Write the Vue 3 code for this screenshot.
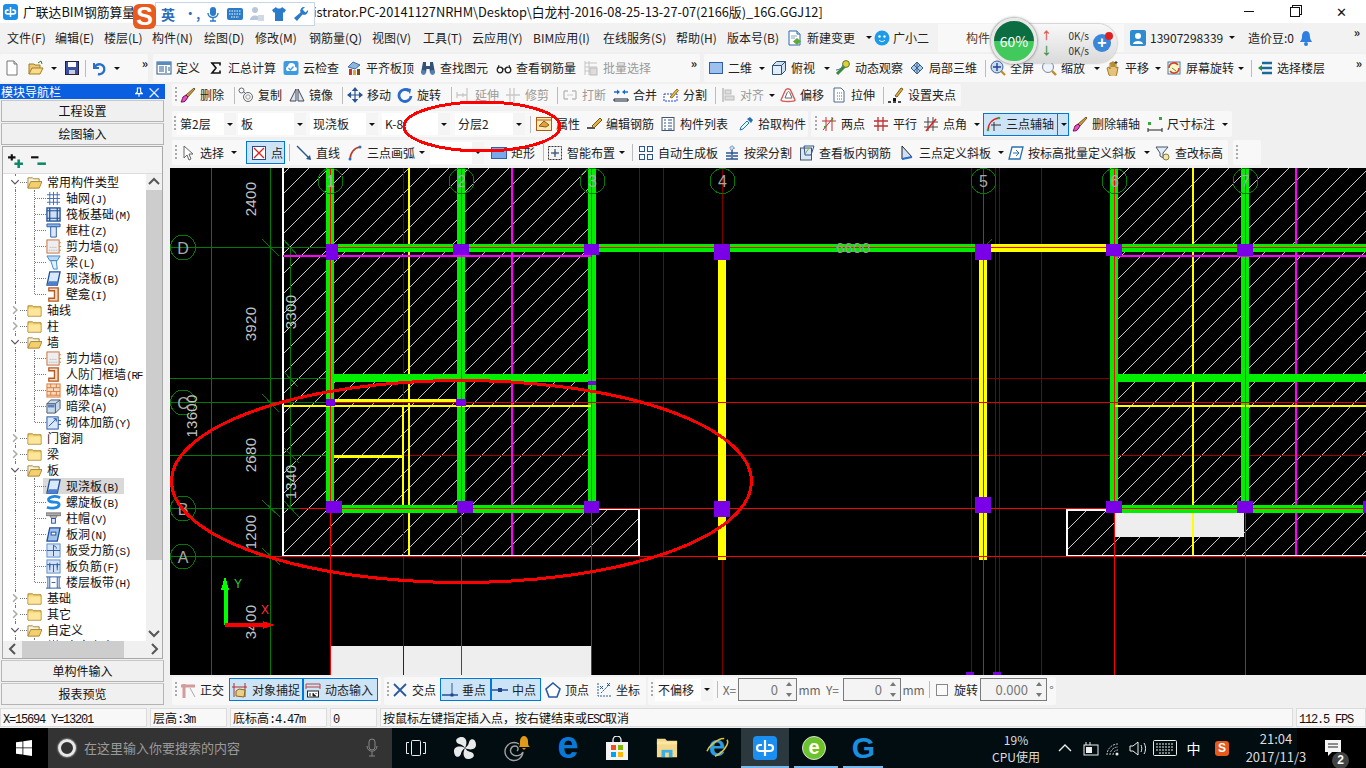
<template>
  <div class="app">
    <!-- иконки -->
    <svg class="defs" width="0" height="0">
      <symbol id="doc" viewBox="0 0 16 16"><path d="M3 1h7l3 3v11H3z" fill="#fff" stroke="#777"/><path d="M10 1v3h3" fill="#ddd" stroke="#777"/></symbol>
      <symbol id="newc" viewBox="0 0 16 16"><path d="M2 1h8l3 3v11H2z" fill="#fff" stroke="#2a6ab0"/><path d="M10 1v3h3" fill="#cfe0f2" stroke="#2a6ab0"/><path d="M4 6h6M4 8h4" stroke="#8ab"/><path d="M10 8l4 3.500-4 3.500-4-3.500z" fill="#5fa83a"/></symbol>
      <symbol id="open" viewBox="0 0 16 16"><path d="M1 14V4h5l1 1h5v3" fill="#e9c877" stroke="#a67c20"/><path d="M1 14l3-6h11l-3 6z" fill="#f8dc8a" stroke="#a67c20"/><path d="M10 3l3-2 1 3" fill="none" stroke="#3a7d2c"/></symbol>
      <symbol id="save" viewBox="0 0 16 16"><rect x="1.500" y="1.500" width="13" height="13" fill="#3d50a8" stroke="#223"/><rect x="4" y="2" width="8" height="5" fill="#fff"/><rect x="5" y="10" width="6" height="4" fill="#c8cde0"/></symbol>
      <symbol id="undo" viewBox="0 0 16 16"><path d="M3 3v5h5" fill="none" stroke="#2a70c8" stroke-width="2"/><path d="M3.500 8a5 5 0 1 1 3.500 6" fill="none" stroke="#2a70c8" stroke-width="2.400"/></symbol>
      <symbol id="def" viewBox="0 0 16 16"><rect x="1" y="2" width="14" height="12" fill="#fff" stroke="#2a5a8a"/><rect x="1" y="2" width="14" height="3" fill="#5a8ac0"/><path d="M3 7h5M3 9h5M3 11h5M10 6v7M12 8h2M12 10h2" stroke="#2a5a8a"/></symbol>
      <symbol id="sigma" viewBox="0 0 16 16"><path d="M3 3h9v2.500M11.500 3H4l4 5-4 5h8v-2.500" fill="none" stroke="#111" stroke-width="1.600"/></symbol>
      <symbol id="cloud" viewBox="0 0 16 16"><rect x="0.500" y="1" width="15" height="14" rx="2" fill="#3f9be0"/><path d="M4 11a3 3 0 0 1 1-5 3.500 3.500 0 0 1 7 1 2 2 0 0 1 0 4z" fill="#fff"/><path d="M5.500 8l2 2 3-3.500" fill="none" stroke="#3f9be0" stroke-width="1.300"/></symbol>
      <symbol id="flat" viewBox="0 0 16 16"><path d="M2 7l5-5 7 3-5 4z" fill="#8fb6df" stroke="#3a6ea5"/><rect x="3" y="9" width="3" height="6" fill="#c0392b"/><rect x="7" y="10" width="3" height="5" fill="#e2a23b"/><rect x="11" y="9" width="3" height="6" fill="#6b4a2a"/></symbol>
      <symbol id="binoc" viewBox="0 0 16 16"><path d="M3 2h3v4h4V2h3l2 11h-5l-.5-4h-3L6 13H1z" fill="#33527a"/><circle cx="3.500" cy="12.500" r="2.400" fill="#5580b0"/><circle cx="12.500" cy="12.500" r="2.400" fill="#5580b0"/></symbol>
      <symbol id="glass" viewBox="0 0 16 16"><circle cx="4" cy="10" r="2.800" fill="#fff" stroke="#222" stroke-width="1.300"/><circle cx="12" cy="10" r="2.800" fill="#fff" stroke="#222" stroke-width="1.300"/><path d="M6.500 9h3M1.500 9L3 5M14.500 9L13 5" stroke="#222" fill="none"/></symbol>
      <symbol id="batch" viewBox="0 0 16 16"><path d="M2 1v14M6 1v14M2 3h12M2 7h12M2 11h12" stroke="#c4c4c4" fill="none"/><rect x="7" y="8" width="7" height="7" fill="#ddd" stroke="#bbb"/></symbol>
      <symbol id="sq2d" viewBox="0 0 16 16"><rect x="1.500" y="2.500" width="13" height="11" fill="#9dc0ec" stroke="#2f5fa8"/></symbol>
      <symbol id="cube" viewBox="0 0 16 16"><path d="M1.500 5.500l4-4h9v9l-4 4h-9z" fill="#cfe0f2" stroke="#31506f"/><path d="M1.500 5.500h9v9M10.500 5.500l4-4" fill="none" stroke="#31506f"/><path d="M2 6h8v8H2z" fill="#e6f0fb" opacity=".8"/></symbol>
      <symbol id="orbit" viewBox="0 0 16 16"><path d="M2 14L13 3" stroke="#3b8a3b" stroke-width="3"/><circle cx="11" cy="4" r="3.400" fill="#e0d040" stroke="#5a7a1a"/><path d="M1 10c3 0 6-2 7-5" fill="none" stroke="#3b70b0"/></symbol>
      <symbol id="local3" viewBox="0 0 16 16"><path d="M2 8l6-6 6 6-6 6z" fill="#a9c8ea" stroke="#3a5f8a"/><path d="M5 5l6 6M8 2v12M11 5l-6 6" stroke="#3a5f8a"/></symbol>
      <symbol id="zall" viewBox="0 0 16 16"><circle cx="7" cy="7" r="6" fill="#c7dcf4" stroke="#3a5f9a"/><path d="M7 3v8M3 7h8" stroke="#27408b" stroke-width="1.400"/><path d="M11 11l4 4" stroke="#c08a2a" stroke-width="2.200"/></symbol>
      <symbol id="zoom" viewBox="0 0 16 16"><circle cx="7" cy="7" r="5.500" fill="#eef3f9" stroke="#7a8ca0"/><path d="M11 11l4 4" stroke="#c08a2a" stroke-width="2.400"/></symbol>
      <symbol id="pan" viewBox="0 0 16 16"><path d="M4 15L2 8l2-1 1 2V3l2 0v4-5h2v5-4h2v5l2-1-1 6-2 6z" fill="#e7c27a" stroke="#a67c20"/><path d="M11 1v3M9.500 2.500h3" stroke="#345"/></symbol>
      <symbol id="rots" viewBox="0 0 16 16"><rect x="2" y="2" width="12" height="12" fill="#fff6c8" stroke="#3a80c0"/><path d="M3 8a5 5 0 0 1 9-3M13 8a5 5 0 0 1-9 3" fill="none" stroke="#d9402a" stroke-width="1.600"/><path d="M6 8l4 3" stroke="#4a9a3a"/></symbol>
      <symbol id="floors" viewBox="0 0 16 16"><path d="M5 3h10M5 8h10M5 13h10" stroke="#1a6a9a" stroke-width="2.500"/><path d="M1 8l4-3v6z" fill="#2a8a3a"/></symbol>
      <symbol id="brush" viewBox="0 0 16 16"><path d="M14 1l1 1-7 8-2-2z" fill="#c89a4a" stroke="#7a5a20"/><path d="M6 8l2 2-2 3c-1 2-3 2-5 2 1-1 1-3 2-5z" fill="#d85ac0" stroke="#805"/></symbol>
      <symbol id="copy" viewBox="0 0 16 16"><circle cx="3.500" cy="3.500" r="2.500" fill="none" stroke="#666"/><circle cx="10" cy="10" r="4.500" fill="none" stroke="#666"/><circle cx="10" cy="10" r="2.200" fill="none" stroke="#999"/><path d="M6 5l2 2" stroke="#2a70c8"/></symbol>
      <symbol id="mirror" viewBox="0 0 16 16"><path d="M7 2v12H1zM9 2v12h6z" fill="#dde7f2" stroke="#445"/></symbol>
      <symbol id="move" viewBox="0 0 16 16"><path d="M8 1v14M1 8h14M8 1L6 3.500h4zM8 15l-2-2.500h4zM1 8l2.500-2v4zM15 8l-2.500-2v4z" stroke="#2a5590" fill="#2a5590" stroke-width="1.200"/></symbol>
      <symbol id="rot" viewBox="0 0 16 16"><path d="M12 4a6 6 0 1 0 2 5" fill="none" stroke="#2a6ac8" stroke-width="2.800"/><path d="M9 1l5 1-1 5z" fill="#2a6ac8"/></symbol>
      <symbol id="ext" viewBox="0 0 16 16"><path d="M12 1v14M2 8h10M2 5v6M8 6v4" stroke="#c8c8c8" fill="none" stroke-width="1.300"/></symbol>
      <symbol id="trim" viewBox="0 0 16 16"><path d="M5 1v14M9 1v14M1 8h14" stroke="#c8c8c8" fill="none" stroke-width="1.300"/></symbol>
      <symbol id="brk" viewBox="0 0 16 16"><path d="M2 4h4M10 4h4M2 12h4M10 12h4M2 4v8M14 4v8" stroke="#bbb" fill="none" stroke-width="1.400"/><path d="M5 8h6" stroke="#ccc"/></symbol>
      <symbol id="merge" viewBox="0 0 16 16"><path d="M1 12h14M1 14h14M1 12v2M15 12v2" stroke="#123" fill="none"/><path d="M1 5h5M15 5h-5" stroke="#1a6ad0" stroke-width="1.500"/><path d="M7 5L4 2.500v5zM9 5l3-2.500v5z" fill="#1a6ad0"/></symbol>
      <symbol id="split" viewBox="0 0 16 16"><rect x="1" y="7" width="13" height="7" fill="#fff" stroke="#2440d0" stroke-dasharray="2 1"/><path d="M7 10L14 2l1.500 1.500L9 11z" fill="#e6c24a" stroke="#8a6a1a"/></symbol>
      <symbol id="align" viewBox="0 0 16 16"><path d="M3 1v14" stroke="#bbb" stroke-width="1.500"/><rect x="5" y="3" width="6" height="4" fill="#ddd" stroke="#bbb"/><rect x="5" y="9" width="9" height="4" fill="#ddd" stroke="#bbb"/></symbol>
      <symbol id="offs" viewBox="0 0 16 16"><path d="M1 13l4-9c1-3 5-3 6 0l4 9c1 2-14 2-14 0z" fill="#fff" stroke="#d65a5a" stroke-width="1.400"/><path d="M5 11l2-5c1-2 2-2 3 0l2 5z" fill="#fff" stroke="#666"/></symbol>
      <symbol id="strch" viewBox="0 0 16 16"><path d="M3 1h7l3 3v11H3z" fill="#fff" stroke="#4a6a8a"/><path d="M6 6h5M6 9h5M6 12h5" stroke="#4a6a8a" stroke-dasharray="1 1"/></symbol>
      <symbol id="setp" viewBox="0 0 16 16"><path d="M7 9l6-8 2 1-6 8z" fill="#e2b24a" stroke="#7a5a10"/><path d="M0 15h3M5 15h3M10 15h3" stroke="#111" stroke-width="1.400"/><rect x="5" y="11" width="3" height="3" fill="#111"/></symbol>
      <symbol id="prop" viewBox="0 0 16 16"><rect x="0.500" y="1.500" width="15" height="13" fill="#ffe9b8" stroke="#b05a10"/><path d="M3 10l5-5 5 4-3 2z" fill="#e2a23b" stroke="#8a5a10"/><path d="M1 4h14" stroke="#b05a10"/></symbol>
      <symbol id="edit" viewBox="0 0 16 16"><path d="M1 12h8" stroke="#222" stroke-width="1.500"/><path d="M6 10L14 2l2 2-8 8z" fill="#e2b24a" stroke="#7a5a10"/></symbol>
      <symbol id="list" viewBox="0 0 16 16"><rect x="2" y="1.500" width="12" height="13" fill="#fff" stroke="#456"/><path d="M4 4h2M8 4h4M4 7h2M8 7h4M4 10h2M8 10h4M4 13h2M8 13h4" stroke="#2a5590"/></symbol>
      <symbol id="pick" viewBox="0 0 16 16"><path d="M2 14l1-3 6-6 2 2-6 6z" fill="#dff" stroke="#2a70b0"/><path d="M9 3l4 4 2-3-3-3z" fill="#2a70b0"/></symbol>
      <symbol id="two" viewBox="0 0 16 16"><path d="M1 5h14M5 1v14M2 14L12 2M11 1v14" stroke="#b33" fill="none"/><rect x="3" y="10" width="2" height="2" fill="#3a3"/><rect x="10" y="3" width="2" height="2" fill="#3a3"/></symbol>
      <symbol id="para" viewBox="0 0 16 16"><path d="M1 5h14M1 10h14M5 1v14M10 1v14" stroke="#b33" fill="none" stroke-width="1.300"/></symbol>
      <symbol id="ang" viewBox="0 0 16 16"><path d="M1 6h14M1 11h14M5 1v14M10 1v14" stroke="#444" fill="none"/><path d="M3 15L13 3" stroke="#d22" stroke-width="1.600"/></symbol>
      <symbol id="arc3" viewBox="0 0 16 16"><path d="M2 15C2 8 6 3 13 2" fill="none" stroke="#d22" stroke-width="1.500"/><path d="M8 6v9M5 9h10" stroke="#333"/><circle cx="2" cy="14" r="1.300" fill="#3a3"/><circle cx="13" cy="2" r="1.300" fill="#3a3"/></symbol>
      <symbol id="dim" viewBox="0 0 16 16"><path d="M1 12v4M15 12v4M1 14h14" stroke="#222" fill="none"/><rect x="1" y="6" width="3" height="3" fill="#3a3"/><rect x="12" y="1" width="3" height="3" fill="#3a3"/></symbol>
      <symbol id="cur" viewBox="0 0 16 16"><path d="M4 1v12l3-3 2 5 2-1-2-5h4z" fill="#fff" stroke="#666"/></symbol>
      <symbol id="ptb" viewBox="0 0 16 16"><rect x="1.500" y="1.500" width="13" height="13" fill="#fff" stroke="#2a4a8a"/><path d="M3 3l10 10M13 3L3 13" stroke="#d22" stroke-width="1.300"/></symbol>
      <symbol id="line" viewBox="0 0 16 16"><path d="M1 1l13 13" stroke="#2a5590" stroke-width="1.400"/><path d="M15 15l-5-1 4-4z" fill="#2a5590"/></symbol>
      <symbol id="arc" viewBox="0 0 16 16"><path d="M3 15C3 8 7 3 13 2" fill="none" stroke="#b83a2a" stroke-width="1.600"/><circle cx="3" cy="14" r="1.500" fill="#2a70c0"/><circle cx="13" cy="2" r="1.500" fill="#2a70c0"/></symbol>
      <symbol id="rect" viewBox="0 0 16 16"><rect x="0.500" y="2.500" width="15" height="11" fill="#7aa8e8" stroke="#2f5fa8"/></symbol>
      <symbol id="smart" viewBox="0 0 16 16"><rect x="1.500" y="1.500" width="13" height="13" fill="#f4f4f4" stroke="#333" stroke-dasharray="2 1"/><path d="M8 4v8M4 8h8" stroke="#222"/><circle cx="8" cy="8" r="1.500" fill="#2a70c0"/></symbol>
      <symbol id="auto" viewBox="0 0 16 16"><g fill="none" stroke="#2a5590"><rect x="1.500" y="1.500" width="5" height="5"/><rect x="9.500" y="1.500" width="5" height="5"/><rect x="1.500" y="9.500" width="5" height="5"/><rect x="9.500" y="9.500" width="5" height="5"/></g></symbol>
      <symbol id="bsp" viewBox="0 0 16 16"><circle cx="8" cy="3" r="2" fill="#c9dcf2" stroke="#2a5590" stroke-dasharray="1 1"/><path d="M8 5v9M2 8h12M2 11h5M9 11h5M2 14h12" stroke="#2a5590" stroke-width="1.400"/></symbol>
      <symbol id="vbar" viewBox="0 0 16 16"><rect x="1.500" y="3" width="11" height="12" fill="#dbe7f5" stroke="#456"/><path d="M5 1l10 0-3 9H6z" fill="none" stroke="#2a5590"/><path d="M6 9l4-6" stroke="#8a3"/></symbol>
      <symbol id="sl3" viewBox="0 0 16 16"><path d="M3 1v13l10-2z" fill="#cde2f8" stroke="#222"/><path d="M3 14l10-2" stroke="#2a70c8" stroke-width="2"/></symbol>
      <symbol id="slb" viewBox="0 0 16 16"><path d="M4 2h11l-3 12H1z" fill="#fff" stroke="#2a70b0" stroke-width="1.300"/><path d="M5 8h6M8 5l3 3-3 3" stroke="#2a70b0" fill="none"/></symbol>
      <symbol id="elev" viewBox="0 0 16 16"><path d="M1 2h12L8 8v5l-3-2V8z" fill="#e4ecf5" stroke="#456"/><circle cx="11" cy="12" r="3" fill="#f3e5a8" stroke="#8a7a3a"/></symbol>
      <symbol id="orth" viewBox="0 0 16 16"><path d="M4 2v14M1 4h14" stroke="#d49b9b" stroke-width="3" fill="none"/><path d="M10 6l5 9" stroke="#aaa"/></symbol>
      <symbol id="snap" viewBox="0 0 16 16"><path d="M2 1v14M13 1v14M0 5h15" stroke="#a33" fill="none"/><path d="M4 14V9l3-2 6 1-1 7z" fill="#e9cf8a" stroke="#8a6a1a"/></symbol>
      <symbol id="dyn" viewBox="0 0 16 16"><path d="M1 2h14M1 5h14M1 2v5M15 2v5" stroke="#b44" fill="none"/><rect x="2.500" y="9" width="11" height="6" fill="#fff" stroke="#222"/><path d="M5 11v3M8 11v3h3M11 11v1" stroke="#222"/></symbol>
      <symbol id="xp" viewBox="0 0 16 16"><path d="M2 2l12 12M14 2L2 14" stroke="#2a5aa0" stroke-width="1.800"/></symbol>
      <symbol id="perp" viewBox="0 0 16 16"><path d="M0 13h16" stroke="#2a5aa0" stroke-width="1.600"/><path d="M10 1v12" stroke="#2a5aa0"/><rect x="8.500" y="11.500" width="3" height="3" fill="#27408b"/></symbol>
      <symbol id="mid" viewBox="0 0 16 16"><path d="M0 8h16" stroke="#2a5aa0" stroke-width="1.600"/><rect x="6" y="6" width="4" height="4" fill="#27408b"/></symbol>
      <symbol id="vtx" viewBox="0 0 16 16"><path d="M8 1l7 6-3 8H4L1 7z" fill="#fff" stroke="#2a5aa0" stroke-width="1.600"/></symbol>
      <symbol id="crd" viewBox="0 0 16 16"><path d="M2 1v13h13M5 11L13 3" stroke="#2a5aa0" fill="none" stroke-dasharray="2 1"/><path d="M4 4l3 3M7 4L4 7M11 1l3 3M14 1l-3 3" stroke="#2a5aa0"/></symbol>
      <symbol id="fclose" viewBox="0 0 16 16"><path d="M1 3h5l1 1h8v10H1z" fill="#f6d473" stroke="#a8852a"/><path d="M1.500 6h13v7.500h-13z" fill="#fbe69b"/></symbol>
      <symbol id="fopen" viewBox="0 0 16 16"><path d="M1 14V3h5l1 1h6v3" fill="#f4f0df" stroke="#a8852a"/><path d="M1 14l3-7h12l-3 7z" fill="#f4cf6e" stroke="#a8852a"/></symbol>
      <symbol id="grid" viewBox="0 0 16 16"><path d="M4 1v14M8 1v14M12 1v14M1 4h14M1 8h14M1 12h14" stroke="#3a6ab8" fill="none"/></symbol>
      <symbol id="raft" viewBox="0 0 16 16"><rect x="1" y="1" width="14" height="14" fill="#cfe0f4" stroke="#1f4f9a" stroke-width="1.400"/><path d="M4 1v14M12 1v14M1 4h14M1 12h14" stroke="#1f4f9a" stroke-width="1.300"/></symbol>
      <symbol id="col" viewBox="0 0 16 16"><path d="M1 1h14v3H1z" fill="#8fb6e8" stroke="#2a5aa8"/><path d="M5 4h6v11H5z" fill="#dbe9fa" stroke="#2a5aa8"/></symbol>
      <symbol id="shear" viewBox="0 0 16 16"><rect x="1" y="1" width="13" height="14" fill="#eee" stroke="#c86a3a"/><path d="M14 4h2M14 8h2M14 12h2" stroke="#d8802a"/><path d="M3 12h9M4 9h7" stroke="#aaa" stroke-dasharray="1 1"/></symbol>
      <symbol id="beam" viewBox="0 0 16 16"><path d="M1 1h14l-3 5H4z" fill="#bcd8f4" stroke="#3a88c8"/><path d="M5 6h6l1 9H8z" fill="#e4f0fc" stroke="#3a88c8"/></symbol>
      <symbol id="slab" viewBox="0 0 16 16"><path d="M4 1h11l-3 14H1z" fill="#d9e8fb" stroke="#1f4f9a" stroke-width="1.400"/><path d="M3 11l-2 4h11l1-4z" fill="#4a80d0"/></symbol>
      <symbol id="niche" viewBox="0 0 16 16"><path d="M3 1h10v14H3v-3h6V4H3z" fill="#f3d9c6" stroke="#b8581f" stroke-width="1.400"/></symbol>
      <symbol id="brick" viewBox="0 0 16 16"><rect x="1" y="1" width="14" height="14" fill="#f8dcc4" stroke="#d87a3a"/><path d="M1 5h14M1 9h14M1 13h14M5 1v4M11 1v4M8 5v4M5 9v4M11 9v4" stroke="#d87a3a"/></symbol>
      <symbol id="dkb" viewBox="0 0 16 16"><path d="M1 5l4-4h10v9l-5 5H1z" fill="#c6d9ee" stroke="#456"/><path d="M1 5h9v10M10 5l5-4" fill="none" stroke="#456"/><rect x="2" y="6" width="7" height="3" fill="#5a80b8"/></symbol>
      <symbol id="wbar" viewBox="0 0 16 16"><rect x="1" y="2" width="12" height="13" fill="#d9e8fb" stroke="#1f4f9a"/><path d="M3 12L11 4M8 4h3v3M13 6h3M13 10h3" stroke="#1f4f9a" fill="none"/></symbol>
      <symbol id="spiral" viewBox="0 0 16 16"><path d="M15 3C10 0 1 2 3 6c2 3 11 0 11 4 0 4-8 5-13 3" fill="none" stroke="#1f8ae0" stroke-width="3"/></symbol>
      <symbol id="cap" viewBox="0 0 16 16"><rect x="0" y="2" width="16" height="3" fill="#aaa" stroke="#777"/><path d="M4 5h8l-2 3H6z" fill="#bbb" stroke="#777"/><rect x="6" y="8" width="4" height="5" fill="#e4f0fc" stroke="#1f4f9a"/></symbol>
      <symbol id="hole" viewBox="0 0 16 16"><path d="M4 1h11l-3 14H1z" fill="#9fc2ee" stroke="#1f4f9a" stroke-width="1.400"/><rect x="5.500" y="5.500" width="5" height="3" fill="#fff" stroke="#1f4f9a"/></symbol>
      <symbol id="bpos" viewBox="0 0 16 16"><rect x="1" y="1" width="14" height="14" fill="#d2e3f8" stroke="#5a8ad0"/><path d="M1 8h14M8 2v12M8 3c3 0 3 2 3 3" stroke="#2a5aa8" fill="none"/></symbol>
      <symbol id="bneg" viewBox="0 0 16 16"><rect x="1" y="1" width="14" height="14" fill="#d2e3f8" stroke="#5a8ad0"/><path d="M1 6h14M4 4v8M12 4v8M4 6v3M12 6v3M8 6v8" stroke="#2a5aa8" fill="none"/></symbol>
      <symbol id="band" viewBox="0 0 16 16"><path d="M0 2h16M0 14h16M4 2v12M12 2v12M2 2v12M14 2v12" stroke="#2a5aa8" fill="none"/><path d="M6 8h4" stroke="#2a5aa8"/></symbol>
      <symbol id="cr" viewBox="0 0 16 16"><path d="M5 2l6 6-6 6" fill="none" stroke="#a9a9a9" stroke-width="2.400"/></symbol>
      <symbol id="cd" viewBox="0 0 16 16"><path d="M2 5l6 6 6-6" fill="none" stroke="#555" stroke-width="2"/></symbol>
      <symbol id="petal" viewBox="0 0 24 24"><path d="M12 12C9 7 5 9 3.500 6 2 2.500 6 1 9 1c4 0 6 5 3 11z" fill="#e8eaea"/></symbol>
    </svg>

    <!-- заголовок окна -->
    <div class="title">
      <span class="logo"><svg viewBox="0 0 24 24"><path d="M12 4v16M7 9h2M15 9h2M7 9c-4 0-4 6 0 6h10c4 0 4-6 0-6" fill="none" stroke="#fff" stroke-width="2.500"/></svg></span>
      <span class="t-name">广联达BIM钢筋算量</span>
      <span class="t-path">istrator.PC-20141127NRHM\Desktop\白龙村-2016-08-25-13-27-07(2166版)_16G.GGJ12]</span>
      <span class="win win-min"></span>
      <span class="win win-max"></span>
      <span class="win win-x">✕</span>
    </div>

    <!-- меню -->
    <div class="menu">
      <span v-for="m in menu" :key="m.t" class="m-it" :style="{ width: m.w + 'px' }">{{ m.t }}</span>
      <svg class="ic"><use href="#newc" /></svg>
      <span class="m-it" style="width:58px;margin-left:4px">新建变更</span>
      <i class="tri"></i>
      <span class="bot-ic">
        <svg viewBox="0 0 16 16"><circle cx="8" cy="8" r="7.500" fill="#1e9be8"/><circle cx="5.500" cy="6.500" r="1.200" fill="#fff"/><circle cx="10.500" cy="6.500" r="1.200" fill="#fff"/><path d="M5 10c2 2 4 2 6 0" stroke="#fff" fill="none"/></svg>
      </span>
      <span class="m-it" style="width:45px">广小二</span>
      <div class="m-panel"><span class="m-brown">构件</span></div>
      <span class="user-ic"><svg viewBox="0 0 16 16"><rect width="16" height="16" rx="2" fill="#2e8bd0"/><circle cx="8" cy="6" r="3" fill="#fff"/><path d="M3 14c0-4 10-4 10 0z" fill="#fff"/></svg></span>
      <span class="m-it" style="width:78px">13907298339</span>
      <i class="tri"></i>
      <span class="m-it" style="width:50px;margin-left:11px">造价豆:0</span>
      <svg class="ic"><path d="M8 1c-3 0-4 3-4 6 0 3-2 4-2 5h12c0-1-2-2-2-5 0-3-1-6-4-6z" fill="#2f7fe0"/><circle cx="8" cy="14" r="2" fill="#2f7fe0"/></svg>
      <span class="more m-more">»</span>
    </div>

    <!-- панели инструментов -->
    <div v-for="row in rows" :key="row.cls" :class="['row', row.cls]">
      <div v-for="(bar, bi) in row.bars" :key="bi" class="bar" :style="{ marginLeft: bar.ml + 'px' }">
        <template v-for="(it, i) in bar.items" :key="i">
          <div v-if="it.g" class="grip-w" :style="{ width: it.w + 'px' }"><i class="grip"></i></div>
          <div v-else-if="it.sep" class="sep-w" :style="{ width: it.w + 'px' }"><i class="sep"></i></div>
          <div v-else-if="it.a" class="arr-w" :style="{ width: it.w + 'px' }"><i class="tri"></i></div>
          <div v-else-if="it.more" class="more" :style="{ width: it.w + 'px' }">»</div>
          <div v-else-if="it.c !== undefined" class="combo" :style="{ width: it.w + 'px' }">
            <span class="cb-t">{{ it.c }}</span>
            <span class="cb-a"><i class="tri"></i></span>
          </div>
          <div v-else-if="it.sp" class="spin" :style="{ width: it.w + 'px' }">
            <span class="sp-v">{{ it.sp }}</span>
            <span class="sp-a"><i class="up"></i><i class="dn"></i></span>
          </div>
          <div v-else-if="it.lbl" class="lbl" :class="{ dark: it.dark }" :style="{ width: it.w + 'px' }">{{ it.lbl }}</div>
          <div v-else-if="it.chk" class="chk-w" :style="{ width: it.w + 'px' }"><i class="chk"></i></div>
          <div v-else class="it" :class="{ on: it.on, dim: it.dim }" :style="{ width: it.w + 'px', paddingLeft: (it.pad || 0) + 'px' }">
            <svg v-if="it.ic" class="ic"><use :href="'#' + it.ic" /></svg>
            <span v-if="it.t" class="lb">{{ it.t }}</span>
            <span v-if="it.split" class="spl"><i class="tri"></i></span>
          </div>
        </template>
      </div>
    </div>

    <!-- навигатор модулей -->
    <aside class="side">
      <div class="s-head">
        <span>模块导航栏</span>
        <svg class="pin" viewBox="0 0 10 12"><path d="M3 1h4v5l2 2H1l2-2zM5 8v4" fill="none" stroke="#fff" stroke-width="1.400"/></svg>
        <span class="s-x">×</span>
      </div>
      <div class="s-btn">工程设置</div>
      <div class="s-btn">绘图输入</div>
      <div class="s-panel">
        <div class="s-tools">
          <svg class="pm" viewBox="0 0 16 16"><path d="M1 5h7M4.500 2v6" stroke="#111" stroke-width="2"/><path d="M7 11h8M11 7v8" stroke="#0a8a6a" stroke-width="2.400"/></svg>
          <svg class="pm" viewBox="0 0 16 16"><path d="M1 5h7" stroke="#111" stroke-width="2"/><path d="M7 11h8" stroke="#0a8a6a" stroke-width="2.400"/></svg>
        </div>
        <div class="s-tree">
          <div class="t-body">
            <div v-for="(n, i) in tree" :key="i" class="t-row" :class="{ leaf: !n.f, sel: n.sel }">
              <i v-if="n.v" class="v-line"></i>
              <template v-if="n.f">
                <i class="h-line"></i>
                <svg class="chev"><use :href="n.open ? '#cd' : '#cr'" /></svg>
                <svg class="f-ic"><use :href="n.open ? '#fopen' : '#fclose'" /></svg>
                <span class="t-lb">{{ n.t }}</span>
              </template>
              <template v-else>
                <i class="elbow" :class="{ last: n.last }"></i>
                <span class="hl">
                  <svg class="l-ic"><use :href="'#' + n.ic" /></svg>
                  <span class="t-lb">{{ n.t }}<span class="key">{{ n.k }}</span></span>
                </span>
              </template>
            </div>
          </div>
          <div class="vs">
            <svg class="sa"><path d="M3 10l5-5 5 5" fill="none" stroke="#555" stroke-width="2"/></svg>
            <div class="vs-track"><div class="vs-thumb"></div></div>
            <svg class="sa"><path d="M3 6l5 5 5-5" fill="none" stroke="#555" stroke-width="2"/></svg>
          </div>
          <div class="hs">
            <svg class="sa"><path d="M10 3L5 8l5 5" fill="none" stroke="#555" stroke-width="2"/></svg>
            <div class="hs-track"><div class="hs-thumb"></div></div>
            <svg class="sa"><path d="M6 3l5 5-5 5" fill="none" stroke="#555" stroke-width="2"/></svg>
          </div>
        </div>
      </div>
      <div class="s-btn">单构件输入</div>
      <div class="s-btn">报表预览</div>
    </aside>

    <!-- чертёж -->
    <svg class="cad" viewBox="170 168 1196 507" width="1196" height="507" shape-rendering="crispEdges">
      <defs>
        <pattern id="hatch" width="20" height="20" patternUnits="userSpaceOnUse" patternTransform="translate(17 0)">
          <path d="M-1 21L21 -1" stroke="#c8c8c8" stroke-width="1" />
        </pattern>
      </defs>
      <path d="M283 168H592V509H639V556H283Z" fill="url(#hatch)" />
      <path d="M1118 168H1366V556H1067V509H1118Z" fill="url(#hatch)" />
      <rect x="331" y="646" width="260" height="29" fill="#eee" />
      <rect x="1115" y="513" width="129" height="24" fill="#eee" />
      <line v-for="(d, i) in ticks" :key="'d' + i" :x1="d[0]" :y1="d[1]" :x2="d[2]" :y2="d[3]" stroke="#007a00" />
      <rect v-for="(r, i) in shapes" :key="'r' + i" :x="r[0]" :y="r[1]" :width="r[2]" :height="r[3]" :fill="r[4]" />
      <g v-for="a in axes" :key="a.t">
        <circle :cx="a.x" :cy="a.y" r="12.500" fill="none" stroke="#007a00" />
        <text :x="a.x" :y="a.y + 6" class="cad-ax">{{ a.t }}</text>
      </g>
      <text v-for="l in dims" :key="l.t + l.y" class="cad-t" :transform="`translate(${l.x} ${l.y}) rotate(-90)`">{{ l.t }}</text>
      <text x="853" y="253" class="cad-t cad-h">6600</text>
      <path d="M225 576l-4 14h3v35h2v-35h3z" fill="#0f0" />
      <rect x="224" y="587" width="3.500" height="38" fill="#0f0" />
      <path d="M274 625l-11-4v2h-38v4h38v2z" fill="#f00" />
      <text x="234" y="588" class="cad-l" fill="#3c3">Y</text>
      <text x="261" y="614" class="cad-l" fill="#f33">X</text>
    </svg>

    <!-- строка состояния -->
    <div class="status">
      <span class="st" style="width:147px"><span class="mono">X=15694 Y=13201</span></span>
      <span class="st" style="width:77px">层高<span class="mono">:3m</span></span>
      <span class="st" style="width:97px">底标高<span class="mono">:4.47m</span></span>
      <span class="st" style="width:47px"><span class="mono">0</span></span>
      <span class="st" style="width:913px">按鼠标左键指定插入点，按右键结束或<span class="mono">ESC</span>取消</span>
      <span class="st" style="width:70px"><span class="mono">112.5 FPS</span></span>
    </div>

    <!-- панель задач -->
    <div class="task">
      <div class="start">
        <svg width="16" height="16" viewBox="0 0 16 16"><path d="M0 2.300l6.500-.9V7.500H0zM7.300 1.300L16 0v7.500H7.300zM0 8.300h6.500v6.300L0 13.700zM7.300 8.300H16V16l-8.700-1.300z" fill="#fff"/></svg>
      </div>
      <div class="search">
        <i class="cortana"></i>
        <span class="s-ph">在这里输入你要搜索的内容</span>
        <svg width="14" height="20" viewBox="0 0 14 20"><rect x="4" y="1" width="6" height="11" rx="3" fill="none" stroke="#888"/><path d="M2 8c0 7 10 7 10 0M7 14v4M4 18h6" fill="none" stroke="#888"/></svg>
      </div>
      <div v-for="t in taskIcons" :key="t.k" class="t-ic" :class="t.k" :style="{ width: t.w + 'px' }">
        <svg v-if="t.k === 'tv'" width="20" height="16" viewBox="0 0 20 16"><rect x="5.500" y="0.500" width="9" height="15" rx="1" fill="none" stroke="#eee"/><path d="M3 2.500H.5v11H3M17 2.500h2.500v11H17" fill="none" stroke="#eee"/></svg>
        <svg v-else-if="t.k === 'pw'" width="24" height="24" viewBox="0 0 24 24">
          <use href="#petal" /><use href="#petal" transform="rotate(90 12 12)" /><use href="#petal" transform="rotate(180 12 12)" /><use href="#petal" transform="rotate(270 12 12)" />
        </svg>
        <svg v-else-if="t.k === 'sp'" width="32" height="28" viewBox="0 0 32 28"><path d="M18 10a9 9 0 1 0 4 8c-2 4-8 5-11 2-3-3-1-8 3-8 3 0 4 3 2 5" fill="none" stroke="#a0a0a0" stroke-width="1.400"/><path d="M18 13c1-1 1-3 1-6 0-3 2-5 4-5s4 2 4 5c0 3 0 5 2 6zM21 14h4l-2 2z" fill="#e09a18"/></svg>
        <svg v-else-if="t.k === 'ed'" width="30" height="36" viewBox="0 0 30 36"><text x="15" y="28" class="ed-t">e</text></svg>
        <svg v-else-if="t.k === 'sto'" width="24" height="24" viewBox="0 0 24 24"><path d="M8 6V4a4 4 0 0 1 8 0v2" fill="none" stroke="#eee" stroke-width="1.300"/><rect x="1" y="6" width="22" height="18" fill="#f4f4f4"/><rect x="6" y="9" width="5" height="5" fill="#f25022"/><rect x="13" y="9" width="5" height="5" fill="#7fba00"/><rect x="6" y="16" width="5" height="5" fill="#00a4ef"/><rect x="13" y="16" width="5" height="5" fill="#ffb900"/></svg>
        <svg v-else-if="t.k === 'ex'" width="22" height="22" viewBox="0 0 24 24"><path d="M1 2h9l2 2h11v18H1z" fill="#f5d98a"/><rect x="1" y="5" width="22" height="3" fill="#fbe7a4"/><rect x="6" y="14" width="12" height="8" fill="#3ab0e8"/><rect x="10" y="17" width="4" height="5" fill="#f5d98a"/></svg>
        <svg v-else-if="t.k === 'ie'" width="30" height="32" viewBox="0 0 30 32"><text x="15" y="24" class="ie-t">e</text><ellipse cx="15" cy="16" rx="13" ry="6" fill="none" stroke="#e3c23a" stroke-width="1.500" transform="rotate(-40 15 16)" stroke-dasharray="22 14"/></svg>
        <span v-else-if="t.k === 'gl'" class="gl-ic"><svg width="24" height="24" viewBox="0 0 24 24"><path d="M12 4v16M7 9h2M15 9h2M7 9c-4 0-4 6 0 6h10c4 0 4-6 0-6" fill="none" stroke="#fff" stroke-width="2.200"/></svg></span>
        <span v-else-if="t.k === 'ge'" class="ge-ic">e</span>
        <span v-else-if="t.k === 'gg'" class="gg-ic">G</span>
      </div>
      <div class="cpu"><span>19%</span><span>CPU使用</span></div>
      <div class="tray">
        <svg width="26" height="16" viewBox="0 0 26 16"><path d="M7 11l6-6 6 6" fill="none" stroke="#eee" stroke-width="1.400"/></svg>
        <svg width="25" height="16" viewBox="0 0 25 16"><rect x="6" y="5" width="14" height="10" fill="none" stroke="#eee"/><rect x="8" y="7" width="6" height="6" fill="#eee"/><path d="M8 2v3M12 2v3" stroke="#eee"/></svg>
        <svg width="23" height="18" viewBox="0 0 23 18"><path d="M4 16a11 11 0 0 1 11-11M7 16a8 8 0 0 1 8-8M10 16a5 5 0 0 1 5-5" fill="none" stroke="#ccc" stroke-dasharray="2 1"/><circle cx="14" cy="15" r="1.500" fill="#eee"/></svg>
        <svg width="24" height="18" viewBox="0 0 24 18"><path d="M4 7h3l5-4v13l-5-4H4z" fill="none" stroke="#eee"/><path d="M15 6c1 2 1 5 0 7M18 4c2 3 2 8 0 11" fill="none" stroke="#eee"/></svg>
        <svg width="30" height="18" viewBox="0 0 30 18"><rect x="3.500" y="1.500" width="23" height="15" rx="1" fill="none" stroke="#eee"/><path d="M6 5h18M6 8h18M6 11h18M9 14h12" stroke="#eee" stroke-dasharray="2 1"/></svg>
        <span class="tr-ch">中</span>
        <span class="tr-s">S</span>
        <div class="clock"><span>21:04</span><span>2017/11/3</span></div>
        <div class="notif">
          <svg width="18" height="18" viewBox="0 0 18 18"><path d="M1 1h16v12H8l-4 4v-4H1z" fill="#f4f4f4"/><path d="M4 5h10M4 8h10" stroke="#222"/></svg>
          <b class="bdg">2</b>
        </div>
      </div>
    </div>

    <!-- красные пометки поверх окна -->
    <svg class="marks" width="1366" height="768" shape-rendering="crispEdges">
      <ellipse cx="482" cy="126.500" rx="78" ry="24.500" />
      <ellipse cx="461.500" cy="481.500" rx="290" ry="101" />
    </svg>

    <!-- панель ввода -->
    <div class="ime">
      <span class="ime-s">S</span>
      <span class="ime-en">英</span>
      <span class="ime-p">•,</span>
      <svg class="ime-i" viewBox="0 0 16 16"><rect x="5" y="1" width="6" height="9" rx="3" fill="#2a7bc8"/><path d="M3 7c0 6 10 6 10 0M8 12v3M5 15h6" fill="none" stroke="#2a7bc8" stroke-width="1.400"/></svg>
      <svg class="ime-i" viewBox="0 0 16 16"><rect x="0" y="2" width="16" height="12" rx="2" fill="#2a7bc8"/><path d="M2 5h12M2 8h12M4 11h8" stroke="#fff" stroke-dasharray="1.500 1"/></svg>
      <svg class="ime-i" viewBox="0 0 16 16"><circle cx="6" cy="4" r="3" fill="#b8c8d8"/><path d="M1 14c0-6 10-6 10 0z" fill="#b8c8d8"/><rect x="9" y="9" width="6" height="6" fill="#d0dae4"/></svg>
      <svg class="ime-i" viewBox="0 0 16 16"><path d="M5 1L1 4l2 3 1-1v9h8V6l1 1 2-3-4-3c-1 2-5 2-6 0z" fill="#2a7bc8"/></svg>
      <svg class="ime-i" viewBox="0 0 16 16"><path d="M15 4a4 4 0 0 1-5.500 4.500L4 15l-3-3 6.500-5.500A4 4 0 0 1 12 1L9.500 3.500l3 3z" fill="#2a7bc8"/></svg>
    </div>

    <!-- сетевой виджет -->
    <div class="net">
      <div class="net-ball"><span>60%</span></div>
      <div class="net-info">
        <div class="net-l"><i class="n-up">↑</i><span>0K/s</span></div>
        <div class="net-l"><i class="n-dn">↓</i><span>0K/s</span></div>
      </div>
      <div class="net-plus">+<i></i></div>
    </div>
  </div>
</template>

<script setup>
// хелперы для элементов панелей
const it = (ic, t, w, o = {}) => ({ ic, t, w, ...o })
const sep = w => ({ sep: 1, w })
const ar = w => ({ a: 1, w })
const gap = w => ({ w })
const grip = w => ({ g: 1, w })
const more = w => ({ more: 1, w })
const combo = (c, w) => ({ c, w })
const lbl = (t, w, dark) => ({ lbl: t, w, dark })

const menu = [
  { t: '文件(F)', w: 48 }, { t: '编辑(E)', w: 49 }, { t: '楼层(L)', w: 48 }, { t: '构件(N)', w: 52 },
  { t: '绘图(D)', w: 51 }, { t: '修改(M)', w: 54 }, { t: '钢筋量(Q)', w: 63 }, { t: '视图(V)', w: 51 },
  { t: '工具(T)', w: 49 }, { t: '云应用(Y)', w: 61 }, { t: 'BIM应用(I)', w: 70 }, { t: '在线服务(S)', w: 73 },
  { t: '帮助(H)', w: 51 }, { t: '版本号(B)', w: 60 }
]

const rows = [
  {
    cls: 'r1',
    bars: [
      { ml: 0, items: [gap(4), it('doc', '', 24), it('open', '', 20), ar(11), gap(5), it('save', '', 18), sep(7), gap(2), it('undo', '', 20), ar(12), more(25)] },
      { ml: 5, items: [gap(3), it('def', '定义', 52), it('sigma', '汇总计算', 75), it('cloud', '云检查', 63), it('flat', '平齐板顶', 74), it('binoc', '查找图元', 76), it('glass', '查看钢筋量', 87), it('batch', '批量选择', 70, { dim: 1 }), more(44), gap(3)] },
      { ml: 4, items: [gap(4), it('sq2d', '二维', 44), ar(19), it('cube', '俯视', 47), ar(17), it('orbit', '动态观察', 74), it('local3', '局部三维', 72), sep(9), it('zall', '全屏', 51), it('zoom', '缩放', 47), ar(17), it('pan', '平移', 45), ar(16), it('rots', '屏幕旋转', 70), ar(10), sep(11), it('floors', '选择楼层', 72), more(33), gap(4)] }
    ]
  },
  {
    cls: 'r2',
    bars: [
      { ml: 2, items: [grip(8), it('brush', '删除', 50), sep(8), it('copy', '复制', 51), it('mirror', '镜像', 49), sep(9), it('move', '移动', 50), it('rot', '旋转', 50), sep(8), it('ext', '延伸', 50, { dim: 1 }), it('trim', '修剪', 48, { dim: 1 }), sep(9), it('brk', '打断', 51, { dim: 1 }), it('merge', '合并', 50), it('split', '分割', 48), sep(9), it('align', '对齐', 48, { dim: 1 }), ar(8), gap(4), it('offs', '偏移', 51), it('strch', '拉伸', 48), sep(9), it('setp', '设置夹点', 72), gap(1)] }
    ]
  },
  {
    cls: 'r3',
    bars: [
      { ml: 2, items: [grip(5), combo('第2层', 59), gap(2), combo('板', 68), gap(4), combo('现浇板', 68), gap(4), combo('K-8', 68), gap(5), combo('分层2', 70), sep(11), it('prop', '属性', 50), it('edit', '编辑钢筋', 74), it('list', '构件列表', 78), it('pick', '拾取构件', 70)] },
      { ml: 3, items: [grip(10), it('two', '两点', 52), it('para', '平行', 50), it('ang', '点角', 48), ar(12), it('arc3', '三点辅轴', 86, { on: 1, pad: 3, split: 1 }), gap(3), it('brush', '删除辅轴', 75), it('dim', '尺寸标注', 70), ar(15)] }
    ]
  },
  {
    cls: 'r4',
    bars: [
      { ml: 2, items: [grip(8), it('cur', '选择', 48), ar(12), gap(6), it('ptb', '点', 39, { on: 1, pad: 5 }), sep(8), gap(3), it('line', '直线', 51), it('arc', '三点画弧', 68), ar(14), gap(1), combo('', 54), gap(7), it('rect', '矩形', 48), sep(8), it('smart', '智能布置', 70), ar(10), sep(11), it('auto', '自动生成板', 86), it('bsp', '按梁分割', 75), it('vbar', '查看板内钢筋', 100), it('sl3', '三点定义斜板', 94), ar(15), it('slb', '按标高批量定义斜板', 130), ar(17), it('elev', '查改标高', 70), gap(3)] },
      { ml: 5, items: [grip(8), gap(20)] }
    ]
  },
  {
    cls: 'rb',
    bars: [
      { ml: 2, items: [grip(8), it('orth', '正交', 49), it('snap', '对象捕捉', 74, { on: 1, pad: 3 }), it('dyn', '动态输入', 75, { on: 1, pad: 2 }), gap(3)] },
      { ml: 3, items: [grip(8), it('xp', '交点', 48), it('perp', '垂点', 51, { on: 1, pad: 2 }), it('mid', '中点', 50, { on: 1, pad: 1 }), gap(4), it('vtx', '顶点', 51), it('crd', '坐标', 49), gap(1)] },
      { ml: 2, items: [grip(7), combo('不偏移', 58), sep(8), lbl('X=', 17), { sp: '0', w: 59 }, lbl('mm', 25), lbl('Y=', 21), { sp: '0', w: 58 }, lbl('mm', 25), sep(6), { chk: 1, w: 20 }, lbl('旋转', 28, true), { sp: '0.000', w: 67 }, lbl('°', 9)] }
    ]
  }
]

const folder = (t, open, v = true) => ({ f: 1, t, open, v })
const leaf = (ic, t, k, o = {}) => ({ ic, t, k, v: true, ...o })

const tree = [
  folder('常用构件类型', true),
  leaf('grid', '轴网', '(J)'), leaf('raft', '筏板基础', '(M)'), leaf('col', '框柱', '(Z)'), leaf('shear', '剪力墙', '(Q)'),
  leaf('beam', '梁', '(L)'), leaf('slab', '现浇板', '(B)'), leaf('niche', '壁龛', '(I)', { last: 1 }),
  folder('轴线', false), folder('柱', false),
  folder('墙', true),
  leaf('shear', '剪力墙', '(Q)'), leaf('niche', '人防门框墙', '(RF'), leaf('brick', '砌体墙', '(Q)'), leaf('dkb', '暗梁', '(A)'),
  leaf('wbar', '砌体加筋', '(Y)', { last: 1 }),
  folder('门窗洞', false), folder('梁', false),
  folder('板', true),
  leaf('slab', '现浇板', '(B)', { sel: 1 }), leaf('spiral', '螺旋板', '(B)'), leaf('cap', '柱帽', '(V)'), leaf('hole', '板洞', '(N)'),
  leaf('bpos', '板受力筋', '(S)'), leaf('bneg', '板负筋', '(F)'), leaf('band', '楼层板带', '(H)', { last: 1 }),
  folder('基础', false), folder('其它', false),
  folder('自定义', true),
  leaf('grid', '自定义点', '(X)')
]

const G = '#00ee00'
const Y = '#ffff00'
const M = '#ff00ff'
const P = '#7a00e8'
const W = '#ffffff'
const R = '#ff0000'
const D = '#800000'
const T = '#007a00'

// все прямые линии чертежа: x, y, w, h, цвет
const shapes = [
  [211, 168, 1, 507, T], [270, 168, 1, 507, T], [290, 247, 1, 261, T],
  [170, 247, 160, 1, T], [170, 378, 160, 1, T], [170, 402, 160, 1, T], [170, 455, 160, 1, T], [170, 508, 130, 1, T], [170, 556, 100, 1, T],
  [403, 168, 1, 507, D], [639, 168, 1, 507, D], [663, 168, 1, 507, D], [722, 168, 1, 507, D],
  [971, 168, 1, 507, D], [995, 168, 1, 507, D], [999, 168, 1, 507, D], [1041, 168, 1, 507, D],
  [596, 378, 770, 1, D], [330, 455, 1036, 1, '#a00000'],
  [408, 168, 2, 388, Y], [402, 405, 2, 100, Y], [1192, 168, 2, 388, Y],
  [511, 168, 2, 388, M], [1295, 168, 2, 388, M],
  [282, 168, 2, 388, W], [283, 555, 356, 2, W], [638, 509, 2, 48, W], [592, 508, 47, 2, W],
  [1066, 509, 2, 48, W], [1067, 509, 48, 2, W], [1067, 555, 299, 2, W], [593, 168, 1, 341, W],
  [326, 168, 8, 345, G], [457, 168, 8, 345, G], [588, 168, 8, 345, G], [1110, 168, 8, 345, G], [1241, 168, 8, 345, G],
  [326, 244, 665, 8, G], [1106, 244, 260, 8, G], [991, 244, 115, 8, Y],
  [326, 374, 270, 8, G], [1114, 374, 252, 8, G], [326, 505, 270, 8, G], [1118, 505, 245, 8, G],
  [718, 260, 8, 300, Y], [979, 260, 8, 300, Y],
  [334, 399, 123, 4, Y], [283, 405, 309, 2, Y], [1115, 405, 251, 2, Y], [334, 455, 68, 3, Y],
  [283, 255, 309, 2, M], [1114, 255, 252, 2, M],
  [330, 168, 1, 507, R], [461, 168, 1, 507, R], [591, 168, 1, 507, R], [983, 168, 1, 507, R], [1114, 168, 1, 507, R], [1245, 168, 1, 507, R],
  [330, 247, 1036, 1, R], [330, 402, 1036, 1, '#e00000'], [300, 508, 1066, 1, R], [270, 556, 1096, 1, R],
  [326, 244, 12, 16, P], [453, 244, 16, 11, P], [584, 244, 15, 11, P], [714, 244, 16, 16, P], [975, 244, 16, 16, P], [1106, 244, 16, 12, P], [1237, 244, 16, 12, P],
  [326, 501, 16, 12, P], [457, 501, 16, 12, P], [584, 501, 15, 12, P], [714, 501, 16, 16, P], [975, 497, 16, 16, P], [1106, 501, 16, 12, P], [1237, 501, 16, 12, P], [1363, 501, 3, 12, P],
  [326, 399, 9, 7, P], [456, 399, 10, 7, P], [588, 381, 8, 4, P], [966, 672, 8, 3, P], [993, 672, 8, 3, P]
]

const ticks = [
  [262, 239, 279, 256], [283, 239, 298, 256], [283, 371, 298, 387], [262, 394, 279, 412],
  [283, 447, 299, 463], [262, 500, 280, 517], [283, 500, 299, 517], [262, 548, 280, 565], [975, 256, 992, 239]
]

const axes = [
  { t: '1', x: 330.5, y: 181 }, { t: '2', x: 461.5, y: 181 }, { t: '3', x: 592.5, y: 181 }, { t: '4', x: 722.5, y: 181 },
  { t: '5', x: 983.5, y: 181 }, { t: '6', x: 1114.5, y: 181 }, { t: '7', x: 1245.5, y: 181 },
  { t: 'D', x: 183, y: 247.5 }, { t: 'C', x: 183, y: 402.5 }, { t: 'B', x: 183, y: 508.5 }, { t: 'A', x: 183, y: 556.5 }
]

const dims = [
  { t: '2400', x: 256, y: 199 }, { t: '3920', x: 256, y: 324 }, { t: '3300', x: 296, y: 312 }, { t: '13600', x: 197, y: 416 },
  { t: '2680', x: 256, y: 455 }, { t: '1340', x: 296, y: 482 }, { t: '1200', x: 256, y: 532 }, { t: '3400', x: 256, y: 622 }
]

const taskIcons = [
  { k: 'tv', w: 48 }, { k: 'pw', w: 50 }, { k: 'sp', w: 54 }, { k: 'ed', w: 48 }, { k: 'sto', w: 50 }, { k: 'ex', w: 50 },
  { k: 'ie', w: 49 }, { k: 'gl', w: 48 }, { k: 'ge', w: 50 }, { k: 'gg', w: 49 }
]
</script>

<style>
html, body { margin: 0; overflow: hidden; background: #f0f0f0; }
</style>

<style scoped>
.app {
  width: 1366px;
  height: 768px;
  position: relative;
  overflow: hidden;
  display: grid;
  grid-template-columns: 170px 1196px;
  grid-template-rows: 23px 29px 32px 25px 30px 29px 507px 33px 20px 40px;
  background: #f0f0f0;
  color: #222;
  font: 12px/16px "Noto Sans CJK SC", "Noto Sans", sans-serif;
}
.defs { position: absolute; }
.ic { width: 16px; height: 16px; flex: none; }
.tri {
  display: inline-block;
  width: 0;
  height: 0;
  border-left: 3px solid transparent;
  border-right: 3px solid transparent;
  border-top: 3px solid #111;
}

/* заголовок */
.title {
  grid-column: 1 / 3;
  background: #fff;
  display: flex;
  align-items: center;
  position: relative;
  font-size: 12.8px;
}
.logo {
  width: 15px;
  height: 16px;
  margin-left: 3px;
  background: #1e8fe6;
  border-radius: 3px;
}
.logo svg { width: 15px; height: 16px; display: block; }
.t-name { margin-left: 5px; width: 290px; color: #111; }
.t-path { color: #111; flex: 1; white-space: nowrap; }
.win { width: 46px; flex: none; height: 23px; position: relative; }
.win-min::after { content: ""; position: absolute; left: 18px; top: 11px; width: 10px; height: 1px; background: #111; }
.win-max::after { content: ""; position: absolute; left: 18px; top: 7px; width: 8px; height: 8px; border: 1px solid #111; box-shadow: 2px -2px 0 -1px #fff, 2px -2px 0 0 #111; }
.win-x { text-align: center; line-height: 23px; font-size: 13px; color: #111; margin-right: 2px; }

/* меню */
.menu {
  grid-column: 1 / 3;
  display: flex;
  align-items: center;
  padding-left: 7px;
  background: #f2f2f2;
  position: relative;
}
.m-it { flex: none; white-space: nowrap; }
.menu .tri { margin: 0 2px 0 1px; flex: none; }
.bot-ic { width: 16px; height: 16px; flex: none; margin-right: 3px; }
.bot-ic svg, .user-ic svg { width: 16px; height: 16px; display: block; }
.m-panel {
  width: 186px;
  height: 28px;
  flex: none;
  margin-right: 6px;
  background: #f8f8f8;
  display: flex;
  align-items: center;
  padding-left: 28px;
  box-sizing: border-box;
}
.m-brown { color: #5c3c1e; }
.user-ic { width: 16px; height: 16px; margin-right: 4px; flex: none; }
.m-more { width: 46px; }

/* панели */
.row { display: flex; grid-column: 2; align-items: flex-start; }
.r1 { grid-column: 1 / 3; padding-top: 2px; }
.r2 .bar { height: 22px; }
.r3 { padding-top: 2px; }
.r3 .bar { height: 26px; }
.r4 { padding-top: 1px; }
.r4 .bar { height: 25px; }
.rb { padding-top: 2px; }
.r1 .bar { height: 28px; }
.rb .bar { height: 28px; padding-bottom: 3px; box-sizing: border-box; }
.bar {
  display: flex;
  align-items: center;
  background: #f8f8f8;
  border-radius: 2px;
  flex: none;
}
.it {
  display: flex;
  align-items: center;
  flex: none;
  box-sizing: border-box;
  height: 100%;
  white-space: nowrap;
}
.it .lb { margin-left: 4px; }
.it.dim { color: #9a9a9a; }
.it.on {
  background: #cde4f7;
  outline: 1px solid #0078d7;
  outline-offset: -1px;
  height: 23px;
}
.spl {
  margin-left: auto;
  width: 11px;
  align-self: stretch;
  display: flex;
  align-items: center;
  justify-content: center;
  border-left: 1px solid #0078d7;
}
.grip-w, .sep-w, .arr-w, .chk-w { display: flex; align-items: center; justify-content: center; flex: none; height: 100%; }
.grip {
  width: 2px;
  height: 16px;
  background: repeating-linear-gradient(180deg, #aaa 0 2px, transparent 2px 4px);
}
.sep { width: 1px; height: 17px; background: #bcbcbc; }
.more { flex: none; text-align: right; font-weight: 700; line-height: 12px; align-self: flex-start; padding-top: 3px; color: #222; }
.combo {
  flex: none;
  height: 22px;
  display: flex;
  align-items: center;
  background: #fff;
  box-sizing: border-box;
  padding-left: 3px;
}
.cb-t { flex: 1; white-space: nowrap; overflow: hidden; }
.cb-a {
  width: 12px;
  height: 100%;
  background: #f4f4f4;
  display: flex;
  align-items: center;
  justify-content: center;
}
.lbl { flex: none; color: #666; white-space: nowrap; text-align: center; }
.lbl.dark { color: #222; }
.spin {
  flex: none;
  height: 23px;
  box-sizing: border-box;
  border: 1px solid #7a7a7a;
  display: flex;
  background: #f4f4f4;
  color: #777;
  align-items: center;
}
.sp-v { flex: 1; text-align: right; padding-right: 4px; font-size: 13px; }
.sp-a { width: 14px; display: flex; flex-direction: column; align-items: center; gap: 7px; }
.up, .dn { width: 0; height: 0; border-left: 3px solid transparent; border-right: 3px solid transparent; }
.up { border-bottom: 4px solid #777; }
.dn { border-top: 4px solid #777; }
.chk { width: 10px; height: 10px; border: 1px solid #888; background: #fafafa; }

/* навигатор */
.side {
  grid-column: 1;
  grid-row: 4 / 9;
  width: 165px;
  display: flex;
  flex-direction: column;
  gap: 1px;
  padding-bottom: 3px;
  box-sizing: border-box;
  min-height: 0;
}
.s-head {
  height: 15px;
  flex: none;
  background: #0a5fe0;
  color: #fff;
  display: flex;
  align-items: center;
  padding-left: 1px;
  line-height: 15px;
}
.pin { width: 8px; height: 10px; margin-left: auto; }
.s-x { width: 22px; text-align: center; font-size: 15px; }
.s-btn {
  height: 20px;
  flex: none;
  line-height: 20px;
  text-align: center;
  background: #f0f0f0;
  border: 1px solid #b4b4b4;
  border-top-color: #c8c8c8;
  box-sizing: content-box;
  margin: 0 1px;
  color: #111;
  font-size: 12px;
}
.s-panel {
  flex: 1;
  min-height: 0;
  margin-left: 2px;
  width: 161px;
  border: 1px solid #a8a8a8;
  box-sizing: border-box;
  display: flex;
  flex-direction: column;
  background: #f4f4f4;
}
.s-tools { height: 26px; display: flex; align-items: center; padding-left: 4px; gap: 6px; flex: none; }
.pm { width: 17px; height: 17px; }
.s-tree {
  flex: 1;
  min-height: 0;
  display: grid;
  grid-template-columns: 143px 16px;
  grid-template-rows: minmax(0, 1fr) 17px;
  background: #f0f0f0;
  border-top: 1px solid #ddd;
}
.t-body { background: #fff; overflow: hidden; padding-top: 0; }
.t-row {
  height: 16px;
  position: relative;
  display: flex;
  align-items: center;
  white-space: nowrap;
}
.chev {
  position: absolute;
  left: 7px;
  top: 3px;
  width: 10px;
  height: 10px;
  background: #fff;
}
.f-ic { width: 15px; height: 15px; margin-left: 24px; flex: none; }
.t-lb { margin-left: 5px; color: #111; }
.key { font: 11px "Liberation Mono", monospace; letter-spacing: -1.200px; }
.v-line { position: absolute; left: 12px; top: 0; bottom: 0; border-left: 1px dotted #777; }
.h-line { position: absolute; left: 14px; width: 10px; top: 8px; border-top: 1px dotted #777; }
.elbow {
  position: absolute;
  left: 31px;
  top: 0;
  width: 11px;
  height: 16px;
  border-left: 1px dotted #777;
}
.elbow::after { content: ""; position: absolute; left: 0; top: 8px; width: 11px; border-top: 1px dotted #777; }
.elbow.last { height: 8px; }
.hl { display: flex; align-items: center; margin-left: 40px; padding-left: 3px; height: 16px; width: 78px; overflow: visible; }
.t-row.sel .hl { background: #d9d9d9; }
.l-ic { width: 15px; height: 15px; flex: none; }
.vs { grid-row: 1; grid-column: 2; display: flex; flex-direction: column; background: #f0f0f0; min-height: 0; }
.sa { width: 16px; height: 16px; flex: none; }
.vs-track { flex: 1; min-height: 0; }
.vs-thumb { height: 370px; background: #cdcdcd; }
.hs { grid-row: 2; grid-column: 1 / 3; display: flex; background: #f0f0f0; padding-left: 2px; }
.hs-track { width: 126px; padding-left: 1px; }
.hs-thumb { width: 102px; height: 100%; background: #cdcdcd; }

/* чертёж */
.cad { grid-column: 2; grid-row: 7; display: block; background: #000; }
.cad-t, .cad-ax, .cad-l {
  font-family: "Liberation Sans", sans-serif;
  shape-rendering: auto;
}
.cad-t { font-size: 15px; fill: #c4c4c4; letter-spacing: 0.3px; text-anchor: middle; }
.cad-h { fill: #999; }
.cad-ax { font-size: 16px; fill: #a8a8a8; text-anchor: middle; }
.cad-l { font-size: 12px; }

/* статус */
.status { grid-column: 1 / 3; display: flex; gap: 3px; align-items: flex-start; }
.st {
  height: 19px;
  box-sizing: border-box;
  background: #f8f8f8;
  border: 1px solid #dcdcdc;
  padding-left: 2px;
  line-height: 17px;
  white-space: nowrap;
  flex: none;
  color: #111;
  overflow: hidden;
}
.mono { font: 12px/17px "Liberation Mono", monospace; letter-spacing: -1.200px; }

/* панель задач */
.task {
  grid-column: 1 / 3;
  display: flex;
  align-items: stretch;
  background: linear-gradient(90deg, #020d12 1297px, #000 1297px);
  color: #eee;
}
.start { width: 48px; background: #000; display: flex; align-items: center; justify-content: center; flex: none; }
.search {
  width: 344px;
  background: #333;
  display: flex;
  align-items: center;
  flex: none;
  box-sizing: border-box;
  padding-left: 10px;
}
.cortana {
  width: 12px;
  height: 12px;
  border-radius: 50%;
  border: 3px solid #e8e8e8;
  box-shadow: 0 0 2px #fff;
  flex: none;
}
.s-ph { color: #9a9a9a; font-size: 13px; margin-left: 8px; flex: 1; }
.search svg { margin-right: 13px; }
.t-ic { display: flex; align-items: center; justify-content: center; flex: none; position: relative; }
.t-ic.gl { background: #2b383e; }
.t-ic.gl::after, .t-ic.ge::after, .t-ic.gg::after {
  content: "";
  position: absolute;
  bottom: 0;
  height: 2px;
  background: #76b9ed;
}
.t-ic.gl::after { left: 0; right: 0; }
.t-ic.ge::after { left: 5px; right: 1px; }
.t-ic.gg::after { left: 4px; right: 5px; }
.ed-t { font: 700 38px "Liberation Sans", sans-serif; fill: #0a78d7; text-anchor: middle; }
.ie-t { font: 700 30px "Liberation Sans", sans-serif; fill: #2d9be0; text-anchor: middle; }
.gl-ic { width: 24px; height: 24px; background: #1a8ff0; border-radius: 4px; }
.gl-ic svg { display: block; }
.ge-ic {
  width: 24px;
  height: 24px;
  border-radius: 50%;
  background: #6cc22a;
  border: 1px solid #ddd;
  box-sizing: border-box;
  color: #fff;
  font: 700 20px/20px "Liberation Sans", sans-serif;
  text-align: center;
}
.gg-ic { color: #1a8fe0; font: 900 30px/30px "Liberation Sans", sans-serif; align-self: center; }
.cpu {
  width: 60px;
  margin-left: 98px;
  flex: none;
  display: flex;
  flex-direction: column;
  align-items: center;
  justify-content: center;
  gap: 1px;
  font-size: 12px;
  line-height: 16px;
  color: #ddd;
}
.tray { display: flex; align-items: center; margin-left: 6px; flex: none; }
.tray > svg { flex: none; }
.tr-ch { width: 27px; text-align: center; font-size: 14px; color: #fff; margin-left: 0; }
.tr-s {
  width: 14px;
  height: 15px;
  margin: 0 8px;
  background: #e65a1e;
  border-radius: 3px;
  color: #fff;
  font: 700 12px/15px "Liberation Sans", sans-serif;
  text-align: center;
}
.clock {
  width: 78px;
  display: flex;
  flex-direction: column;
  align-items: center;
  font-size: 13px;
  line-height: 18px;
  color: #ddd;
}
.notif { width: 36px; position: relative; display: flex; align-items: center; justify-content: center; }
.bdg {
  position: absolute;
  left: 17px;
  top: 13px;
  width: 17px;
  height: 17px;
  border-radius: 50%;
  background: #444;
  color: #fff;
  font: 700 12px/17px "Liberation Sans", sans-serif;
  text-align: center;
}

/* поверх окна */
.marks { position: absolute; left: 0; top: 0; pointer-events: none; }
.marks ellipse { fill: none; stroke: #f00; stroke-width: 3; }

.ime {
  position: absolute;
  left: 133px;
  top: 2px;
  width: 182px;
  height: 24px;
  display: flex;
  align-items: center;
}
.ime::before {
  content: "";
  position: absolute;
  left: 22px;
  right: 0;
  top: 0;
  bottom: 0;
  background: #fff;
  border: 1px solid #c6d6e6;
}
.ime > * { position: relative; }
.ime-s {
  width: 27px;
  height: 25px;
  background: #e85a1e;
  border-radius: 6px;
  color: #fff;
  font: 900 25px/25px "Liberation Sans", sans-serif;
  text-align: center;
  margin-top: 5px;
}
.ime-en { margin-left: 5px; color: #2a6eb8; font-size: 14px; font-weight: 700; width: 18px; }
.ime-p { width: 30px; margin-left: 3px; color: #2a6eb8; font-weight: 700; text-align: center; }
.ime-i { width: 16px; height: 16px; margin-right: 6px; flex: none; }

.net {
  position: absolute;
  left: 991px;
  top: 18px;
  width: 126px;
  height: 48px;
}
.net::before {
  content: "";
  position: absolute;
  left: 20px;
  right: 0;
  top: 6px;
  height: 39px;
  border-radius: 0 20px 20px 0;
  background: linear-gradient(#f8f8f8, #dadada);
  box-shadow: 0 0 2px #888;
}
.net-ball {
  position: absolute;
  left: 0;
  top: 0;
  width: 46px;
  height: 46px;
  box-sizing: border-box;
  border-radius: 50%;
  border: 3px solid #e8e8e8;
  box-shadow: 0 0 3px #555;
  background: linear-gradient(#0b6e42 50%, #42c95c 50%);
  color: #fff;
  text-align: center;
  font-size: 14px;
  line-height: 40px;
}
.net-info { position: absolute; left: 50px; top: 10px; width: 48px; }
.net-l { display: flex; justify-content: space-between; height: 15px; font-size: 10px; line-height: 15px; color: #333; }
.net-l i { font-style: normal; font-weight: 700; font-size: 11px; }
.n-up { color: #e0604a; }
.n-dn { color: #3a9a4a; }
.net-plus {
  position: absolute;
  left: 102px;
  top: 16px;
  width: 18px;
  height: 18px;
  border-radius: 50%;
  background: #3a86d8;
  color: #fff;
  text-align: center;
  font: 700 16px/18px "Liberation Sans", sans-serif;
}
.net-plus i {
  position: absolute;
  right: -2px;
  top: -2px;
  width: 8px;
  height: 8px;
  border-radius: 50%;
  background: #e02020;
}
</style>
